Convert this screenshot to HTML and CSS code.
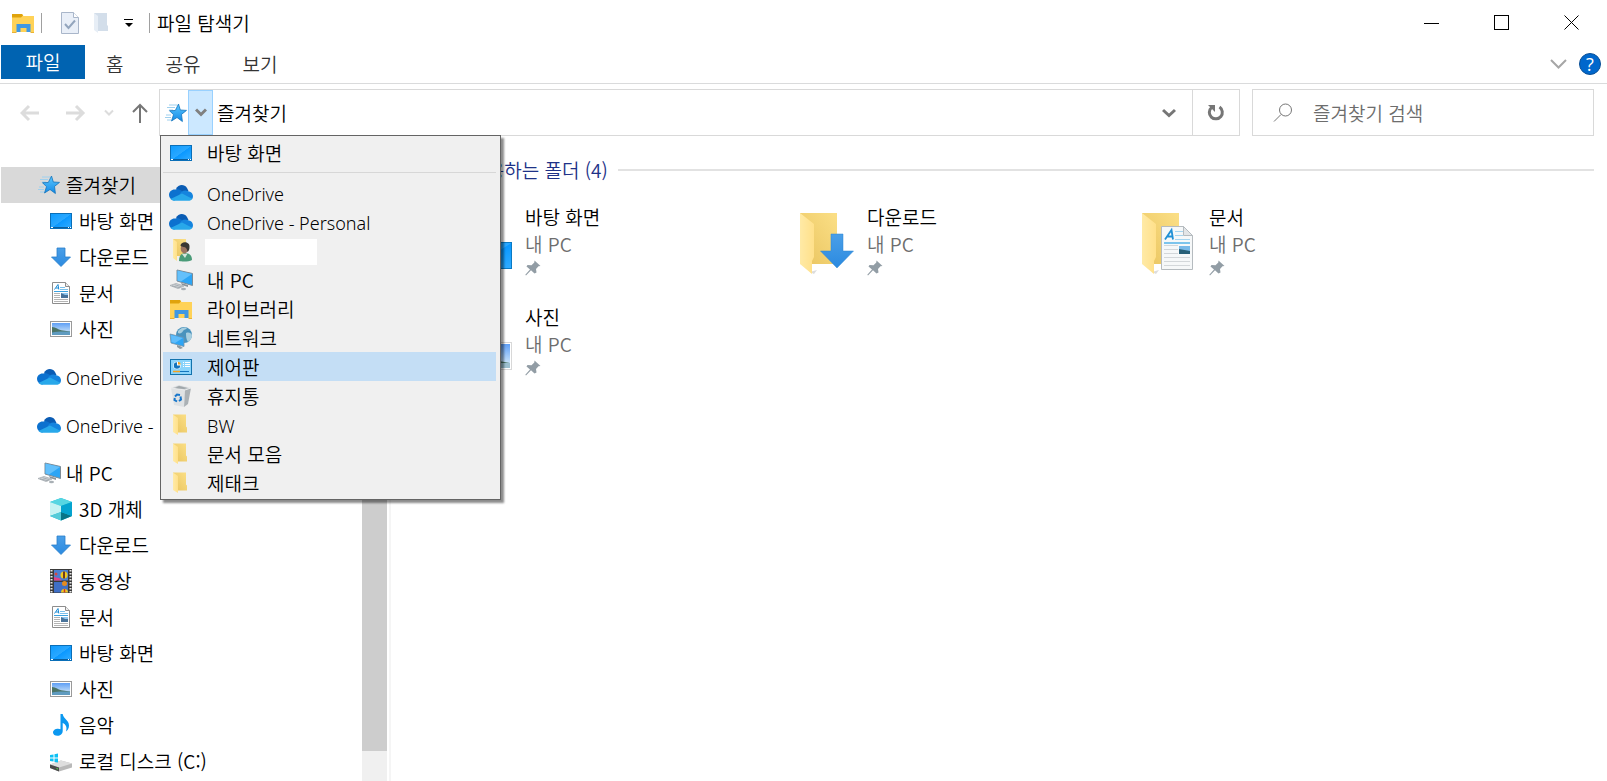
FILE: index.html
```html
<!DOCTYPE html>
<html lang="ko">
<head>
    <meta charset="UTF-8">
    <meta name="viewport" content="width=device-width, initial-scale=1.0">
    <title>파일 탐색기</title>
    <link rel="stylesheet" href="styles.css">
</head>
<body>
    <!-- Icons -->
    <svg class="defs" width="0" height="0" aria-hidden="true">
        <defs>
            <linearGradient id="gBlue" x1="0" y1="0" x2="0" y2="1"><stop offset="0" stop-color="#4a9fe8"/><stop offset="1" stop-color="#2b8ae0"/></linearGradient>
            <linearGradient id="gScreen" x1="0" y1="0" x2="1" y2="1"><stop offset="0" stop-color="#0d9bff"/><stop offset=".5" stop-color="#2aa8ff"/><stop offset=".52" stop-color="#0a98ff"/><stop offset="1" stop-color="#33adff"/></linearGradient>
            <linearGradient id="gFolder" x1="0" y1="0" x2="1" y2="0"><stop offset="0" stop-color="#ffeaa6"/><stop offset="1" stop-color="#ffe08a"/></linearGradient>
            <linearGradient id="gBack" x1="1" y1="0" x2="0" y2="1"><stop offset="0" stop-color="#fbdf86"/><stop offset="1" stop-color="#e9c45f"/></linearGradient>
            <linearGradient id="gSky" x1="0" y1="0" x2="0" y2="1"><stop offset="0" stop-color="#5f9ff5"/><stop offset="1" stop-color="#e4f4fb"/></linearGradient>
            <linearGradient id="gStar" x1="0" y1="0" x2="0" y2="1"><stop offset="0" stop-color="#5cc8ff"/><stop offset="1" stop-color="#1389e6"/></linearGradient>
        </defs>
        <symbol id="star" viewBox="0 0 24 24">
            <path d="M5 4h8M3 6.500h8M5 9h4M2 14h5M1 16.500h6M3 19h4" stroke="#9fd0ee" stroke-width="1"/>
            <path d="M14.500 3l1.800 6 6.200.4-5 4 .9 7.100-5.400-4-5.500 3.500 2-6.300-4-4 5.800-.2z" fill="url(#gStar)" stroke="#1273bd" stroke-width=".8"/>
        </symbol>
        <symbol id="desktop" viewBox="0 0 24 24">
            <rect x="1.500" y="4.500" width="21" height="15" fill="url(#gScreen)" stroke="#0a6fb8"/>
            <path d="M2 18.500h20" stroke="#0b5e9c"/><path d="M2 18.500h2M19 18.500h1M21 18.500h1" stroke="#fff"/>
        </symbol>
        <symbol id="download" viewBox="0 0 24 24">
            <path d="M8 3h8v9h5.500L12 21.500 2.500 12H8z" fill="url(#gBlue)" stroke="#2a7fca" stroke-width=".8"/>
        </symbol>
        <symbol id="doc" viewBox="0 0 24 24">
            <path d="M3.500 1.500h13l4 4v17h-17z" fill="#fff" stroke="#8d8d8d"/>
            <path d="M16.500 1.500v4h4" fill="#eee" stroke="#8d8d8d"/>
            <path d="M5.500 8.500L9 3.500l.8 5M7 7h3" stroke="#1a8ad4" stroke-width="1" fill="none"/>
            <path d="M11 6.500h5M11 8.500h8" stroke="#7cc0ea"/><path d="M5 10.500h14" stroke="#3ba2e0"/>
            <path d="M5 12.500h6M5 14.500h6M5 16.500h6M5 18.500h14M5 20.500h14" stroke="#b4b4b4"/>
            <rect x="12" y="12" width="7" height="5" fill="#49739a"/><path d="M12 12h7v2h-3z" fill="#8ec6ee"/>
        </symbol>
        <symbol id="picture" viewBox="0 0 24 24">
            <rect x="1.500" y="4.500" width="21" height="15" fill="#fff" stroke="#9a9a9a"/>
            <rect x="3" y="6" width="18" height="12" fill="url(#gSky)"/>
            <path d="M3 10c4 0 6 3 11 3.500l7 1V18H3z" fill="#4b7466"/><path d="M3 15.500c6-1.500 12-1 18-1V18H3z" fill="#5f9bc0"/>
        </symbol>
        <symbol id="cloud" viewBox="0 0 24 24">
            <path d="M7 8C9 3.500 15 2.500 18 7l1.500 3L13 14z" fill="#0a5cb4"/>
            <path d="M5.500 19.500A5.600 5.600 0 0 1 0 14c0-3.500 3-6 6.500-5.500 2-.7 4.500 0 6 1.200l3 3.300z" fill="#0c71cf"/>
            <path d="M10 15c1.500-5 6-6.500 9-4.700 2.800.2 5 2.400 5 5 0 1.200-.4 2.200-1 2.900z" fill="#1584de"/>
            <path d="M1.500 18l11.500-5.500 10.300 5.200c-.8 1.300-2.200 2.100-4 2.100H5.500c-1.600 0-3-.7-4-1.800z" fill="#28a8ea"/>
        </symbol>
        <symbol id="pc" viewBox="0 0 24 24">
            <path d="M8 2l15.500 3.500v12L8 13z" fill="#2da5f5" stroke="#7e8c96"/>
            <path d="M8.500 2.500l14.500 3.500L12 13.500l-3.500-1z" fill="#64c0fb"/>
            <path d="M12 15l7 2v2l-6-2z" fill="#8a949b"/>
            <path d="M1 17.500l6-2 8 2.500-6 2.500z" fill="#d5d9dc" stroke="#a4abb0" stroke-width=".8"/>
            <path d="M3 17.800l8 2M5.500 16.700l7 2" stroke="#9099a0" stroke-width=".7"/>
            <ellipse cx="14.500" cy="21" rx="2.500" ry="1.200" fill="#a9b0b5"/>
        </symbol>
        <symbol id="cube" viewBox="0 0 24 24">
            <path d="M12 1l11 4v14l-11 4.500L1 19V5z" fill="#12bcd4"/>
            <path d="M12 1l11 4-11 4L1 5z" fill="#57d6e2"/><path d="M1 5l11 4v6L1 19z" fill="#c6f3f3"/>
            <path d="M1 19l11-4v8.500z" fill="#56cbd8"/><path d="M12 15l11 4-11 4.500z" fill="#087486"/><path d="M12 9l11-4v14l-11-4z" fill="#05a3cf"/>
        </symbol>
        <symbol id="video" viewBox="0 0 24 24">
            <rect x="1" y="0" width="22" height="24" fill="#3a3a3a"/>
            <path d="M2.500 1v23M21.500 1v23" stroke="#e8e8e8" stroke-width="2" stroke-dasharray="1.500 1.500"/>
            <rect x="5" y="1" width="14" height="10.500" fill="#4b7fd2"/><rect x="5" y="13" width="14" height="10.500" fill="#3f6fc6"/>
            <path d="M5 8l5 1 3 2.500H5z" fill="#e0428a"/><circle cx="15" cy="6" r="3.500" fill="#f2c81f"/><path d="M15 2.500v7" stroke="#6d3a20" stroke-width="2"/>
            <circle cx="15.500" cy="14.500" r="2.500" fill="#e58b20"/><path d="M12 23.500c0-5 7-5 7 0z" fill="#f2c81f"/><path d="M15.500 20v3.500" stroke="#c8382c" stroke-width="1.500"/>
            <circle cx="7" cy="5" r="1.500" fill="#d54843"/>
        </symbol>
        <symbol id="music" viewBox="0 0 24 24">
            <path d="M11.500 1h2.200c.5 4.500 6.300 6 6.300 11.500 0 3-1.500 5-3 6 1.300-4.500 0-7-3.300-8.500v8c0 3-2.500 4.800-5.200 4.800C6 22.800 4 21.500 4 19.500c0-2.200 2.300-3.800 5-3.800 1 0 1.800.2 2.500.5z" fill="#0b98f0"/>
        </symbol>
        <symbol id="drive" viewBox="0 0 24 24">
            <path d="M1 15.500l11-4 11 3v4l-13 4-9-3.500z" fill="#b9b9b9"/><path d="M1 15.500l11-4 11 3-13 4z" fill="#dedede"/>
            <path d="M1 15.500l9 3v4L1 19z" fill="#4a4a4a"/><path d="M7.500 19.500l1.500.5" stroke="#54e04a"/>
            <path d="M1 6l3.500-.6v3.100H1zM5.500 5.200L9 4.600v3.900H5.500zM1 9.500h3.500v3.100L1 12.100zM5.500 9.500H9v4l-3.500-.6z" fill="#0cc0f4"/>
        </symbol>
        <symbol id="library" viewBox="0 0 24 24">
            <path d="M1 3h10l1.500 2H23v16H1z" fill="#ffd257"/><path d="M1 3h10l1 1.500-2 2H1z" fill="#e0a30c"/>
            <path d="M5.500 21v-8h14v8h-4v-4h-6v4z" fill="#3f98e4"/><path d="M1 21h4.500v1H1zM19.500 21H23v1h-3.500z" fill="#e9b233"/>
        </symbol>
        <symbol id="user" viewBox="0 0 24 24">
            <path d="M4 1h13v17H8z" fill="url(#gBack)"/><path d="M4 1l4 3v19l-4-3z" fill="url(#gFolder)"/>
            <path d="M10 23c0-6 3-8 6.500-8s6.500 2 6.500 7c-3 1.800-10 1.800-13 1z" fill="#4a9b78"/><path d="M13 16l3 4 2.500-4.500z" fill="#d6e6dd"/>
            <ellipse cx="15.500" cy="10.500" rx="3.800" ry="5" fill="#9b7460"/><path d="M11.500 8c0-5 9.500-5 9 1 0 3-1 4-2 5-.2-3-1.500-5-4-5z" fill="#383633"/>
        </symbol>
        <symbol id="network" viewBox="0 0 24 24">
            <circle cx="15" cy="9" r="8" fill="#4a93bd"/><path d="M9 5c3-4 8-4 9-3-1 2-3 1-4 3s-3 3-5 2zM17 7c3-1 5 0 6 2 0 3-2 6-4 7-2-3-2-6-2-9z" fill="#a9cfdf"/>
            <path d="M1 8l14 3.500v9L2 17z" fill="#2da5f5" stroke="#7593a8" stroke-width=".8"/><path d="M2 9l12 3-8 5-3.500-1z" fill="#60bdfb"/>
            <path d="M8 19v2l3 2 3-1-3-2z" fill="#8d999f"/>
        </symbol>
        <symbol id="control" viewBox="0 0 24 24">
            <rect x="1.500" y="4.500" width="21" height="15" fill="#8bd4fb" stroke="#1273ad"/>
            <circle cx="8" cy="10.500" r="3.800" fill="#fff"/><path d="M8 10.500V7.300A3.200 3.200 0 1 0 11.200 10.500z" fill="#1475bd"/><path d="M9 9.500V6.700a3 3 0 0 1 2.800 2.800z" fill="#f5a21c"/>
            <path d="M14 7.500h1M16 7.500h5M14 9.500h1M16 9.500h5M14 11.500h1M16 11.500h5" stroke="#fff"/><path d="M4 16.500h7" stroke="#f5a21c" stroke-width="1.500"/><path d="M11 16.500h9" stroke="#1475bd"/>
        </symbol>
        <symbol id="trash" viewBox="0 0 24 24">
            <path d="M2 4l14 2-1 17-10-2z" fill="#dfe2e4"/><path d="M16 6l6-2-3 16-4 3z" fill="#abb1b5"/>
            <path d="M2 4l8-3 12 3-6 2z" fill="#c4c9cc" stroke="#eceeef" stroke-width=".8"/><path d="M6 4l4-2 8 2-3 1z" fill="#a0a7ab"/>
            <path d="M6 12.500l2-2 3 .5M11.500 12.500l.5 3-2 1.500M8 17.500L5.500 16l.3-2" stroke="#1877cc" stroke-width="2" fill="none"/>
        </symbol>
        <symbol id="folder" viewBox="0 0 24 24">
            <path d="M4 1.500h13v12l1 1v5H8z" fill="url(#gBack)"/><path d="M4 1.500l5 3.500v17l-5-3z" fill="url(#gFolder)"/>
        </symbol>
        <symbol id="bigfolder" viewBox="0 0 64 64">
            <path d="M26 58l-3 4-4-2z" fill="#ddd"/><path d="M9 1h37v51H9z" fill="url(#gBack)"/><path d="M9 1l14 11v33l-2 4v13L9 52z" fill="url(#gFolder)"/>
        </symbol>
        <symbol id="bigdoc" viewBox="0 0 32 44">
            <path d="M.500.500h22l9 9v34H.500z" fill="#f6f8f9" stroke="#b5bbbf"/><path d="M22.500.500v9h9z" fill="#e3e5e7" stroke="#b5bbbf"/>
            <path d="M4 13.500L10.500 4l1.500 9.500M6.500 10.500h5" stroke="#2291d6" stroke-width="1.800" fill="none"/>
            <path d="M3 19.500h14M3 23.500h14M3 27.500h14M3 31.500h26M3 35.500h26M3 39.500h26" stroke="#d3d7da"/>
            <path d="M14 5.500h8M14 9.500h8M14 13.500h15" stroke="#a5d5f0"/><path d="M3 17h26" stroke="#7cc4ec" stroke-width="2"/>
            <rect x="18" y="20" width="11" height="8" fill="#78b9e8"/><path d="M18 23l11 2v3H18z" fill="#286078"/>
        </symbol>
        <symbol id="pin" viewBox="0 0 16 16">
            <path d="M9.500.500l6 5.500-2 .3-2.500 2.700.5 3.500-2 1-3.500-3.200L1 15.500l-.7-.7L5 9.500 1.500 6.500l1-1.500 4 .3L9.300 2.500z" fill="#929da5"/>
        </symbol>
    </svg>

    <div class="titlebar">
        <svg class="icon"><use href="#library"/></svg>
        <span class="sep"></span>
        <button class="quick" aria-label="속성">
            <svg width="18" height="22" viewBox="0 0 18 22"><path d="M.500.500h12l5 5v16H.500z" fill="#e9eff8" stroke="#a9b6ca"/><path d="M12.500.500v5h5" fill="#fff" stroke="#a9b6ca"/><path d="M4 12l3.500 4L14 8.500" fill="none" stroke="#93a5bd" stroke-width="2"/></svg>
        </button>
        <button class="quick" aria-label="새 폴더">
            <svg width="15" height="22" viewBox="0 0 15 22"><path d="M0 1h13v12l1 1v5H4z" fill="#d3deea"/><path d="M0 1l4 3v17l-4-3z" fill="#e7eef6"/></svg>
        </button>
        <button class="quick" aria-label="빠른 실행 도구 모음 사용자 지정">
            <svg width="10" height="10" viewBox="0 0 10 10"><path d="M0 1.500h9" stroke="#000"/><path d="M1 5h8L5 9z"/></svg>
        </button>
        <span class="sep"></span>
        <span class="title">파일 탐색기</span>
        <div class="window-buttons">
            <button aria-label="최소화"><svg width="16" height="16"><path d="M0 8.500h15" stroke="#000"/></svg></button>
            <button aria-label="최대화"><svg width="16" height="16"><rect x=".5" y=".5" width="14" height="14" fill="none" stroke="#000"/></svg></button>
            <button aria-label="닫기"><svg width="16" height="16"><path d="M.500.500l14 14M14.500.500l-14 14" stroke="#000"/></svg></button>
        </div>
    </div>

    <div class="ribbon">
        <button class="tab file">파일</button>
        <button class="tab">홈</button>
        <button class="tab">공유</button>
        <button class="tab">보기</button>
        <div class="ribbon-right">
            <button aria-label="리본 확장"><svg width="17" height="10"><path d="M1 1l7.500 7.500L16 1" fill="none" stroke="#a6a6a6" stroke-width="2"/></svg></button>
            <button class="help" aria-label="도움말">?</button>
        </div>
    </div>

    <div class="toolbar">
        <div class="history">
            <button aria-label="뒤로"><svg width="20" height="18"><path d="M19 9H2M9 2L2 9l7 7" fill="none" stroke="#dcdcdc" stroke-width="3"/></svg></button>
            <button aria-label="앞으로"><svg width="20" height="18"><path d="M0 9h17M10 2l7 7-7 7" fill="none" stroke="#dcdcdc" stroke-width="3"/></svg></button>
            <button class="recent" aria-label="최근 위치"><svg width="10" height="8"><path d="M1 1.500l4 4 4-4" fill="none" stroke="#dcdcdc" stroke-width="2"/></svg></button>
            <button class="up" aria-label="위로"><svg width="16" height="20"><path d="M8 20V2M1 9l7-7 7 7" fill="none" stroke="#767676" stroke-width="2"/></svg></button>
        </div>
        <div class="address">
            <svg class="icon"><use href="#star"/></svg>
            <button class="drop" aria-label="위치 목록"><svg width="12" height="9"><path d="M1 1.500l5 5 5-5" fill="none" stroke="#808080" stroke-width="3"/></svg></button>
            <button class="crumb">즐겨찾기</button>
            <button class="previous" aria-label="이전 위치"><svg width="14" height="10"><path d="M1 2l6 5.500L13 2" fill="none" stroke="#767676" stroke-width="3"/></svg></button>
            <button class="refresh" aria-label="새로 고침"><svg width="18" height="18" viewBox="0 0 18 18"><path d="M4.500 3.500A6.500 6.500 0 1 0 12.500 3" fill="none" stroke="#767676" stroke-width="3"/><path d="M1 1h7v7z" fill="#767676"/></svg></button>

            <div class="menu">
                <button><svg class="icon"><use href="#desktop"/></svg>바탕 화면</button>
                <hr>
                <button class="latin"><svg class="icon"><use href="#cloud"/></svg>OneDrive</button>
                <button class="latin"><svg class="icon"><use href="#cloud"/></svg>OneDrive - Personal</button>
                <button class="account" aria-label="사용자"><svg class="icon"><use href="#user"/></svg><span class="blank"></span></button>
                <button><svg class="icon"><use href="#pc"/></svg>내 PC</button>
                <button><svg class="icon"><use href="#library"/></svg>라이브러리</button>
                <button><svg class="icon"><use href="#network"/></svg>네트워크</button>
                <button class="active"><svg class="icon"><use href="#control"/></svg>제어판</button>
                <button><svg class="icon"><use href="#trash"/></svg>휴지통</button>
                <button class="latin"><svg class="icon"><use href="#folder"/></svg>BW</button>
                <button><svg class="icon"><use href="#folder"/></svg>문서 모음</button>
                <button><svg class="icon"><use href="#folder"/></svg>제태크</button>
            </div>
        </div>
        <label class="search">
            <svg width="20" height="20" viewBox="0 0 20 20"><circle cx="12.500" cy="7" r="6" fill="none" stroke="#767676"/><path d="M8 11.500L1 18.500" stroke="#767676"/></svg>
            <input type="text" placeholder="즐겨찾기 검색" aria-label="즐겨찾기 검색">
        </label>
    </div>

    <div class="container">
        <nav class="sidebar">
            <div class="tree">
                <div class="group">
                    <a href="#" class="root selected"><svg class="icon"><use href="#star"/></svg>즐겨찾기</a>
                    <a href="#"><svg class="icon"><use href="#desktop"/></svg>바탕 화면</a>
                    <a href="#"><svg class="icon"><use href="#download"/></svg>다운로드</a>
                    <a href="#"><svg class="icon"><use href="#doc"/></svg>문서</a>
                    <a href="#"><svg class="icon"><use href="#picture"/></svg>사진</a>
                </div>
                <div class="group">
                    <a href="#" class="root latin"><svg class="icon"><use href="#cloud"/></svg>OneDrive</a>
                </div>
                <div class="group">
                    <a href="#" class="root latin"><svg class="icon"><use href="#cloud"/></svg>OneDrive -</a>
                </div>
                <div class="group">
                    <a href="#" class="root"><svg class="icon"><use href="#pc"/></svg>내 PC</a>
                    <a href="#"><svg class="icon"><use href="#cube"/></svg>3D 개체</a>
                    <a href="#"><svg class="icon"><use href="#download"/></svg>다운로드</a>
                    <a href="#"><svg class="icon"><use href="#video"/></svg>동영상</a>
                    <a href="#"><svg class="icon"><use href="#doc"/></svg>문서</a>
                    <a href="#"><svg class="icon"><use href="#desktop"/></svg>바탕 화면</a>
                    <a href="#"><svg class="icon"><use href="#picture"/></svg>사진</a>
                    <a href="#"><svg class="icon"><use href="#music"/></svg>음악</a>
                    <a href="#"><svg class="icon"><use href="#drive"/></svg>로컬 디스크 (C:)</a>
                </div>
            </div>
            <div class="scrollbar"><div class="thumb"></div></div>
        </nav>

        <main class="content">
            <h2>자주 사용하는 폴더 (4)</h2>
            <div class="tiles">
                <div class="tile">
                    <svg class="tile-icon" viewBox="0 0 64 64"><use href="#bigfolder" width="64" height="64"/><rect x="20.500" y="30.500" width="42" height="26" fill="url(#gScreen)" stroke="#0a7ac4"/></svg>
                    <div class="tile-text"><span>바탕 화면</span><span class="place">내 PC</span><svg class="pin"><use href="#pin"/></svg></div>
                </div>
                <div class="tile">
                    <svg class="tile-icon" viewBox="0 0 64 64"><use href="#bigfolder" width="64" height="64"/><path d="M40 22h12v17h10.500L46 56 29.500 39H40z" fill="url(#gBlue)" stroke="#2f86d2" stroke-width=".5"/></svg>
                    <div class="tile-text"><span>다운로드</span><span class="place">내 PC</span><svg class="pin"><use href="#pin"/></svg></div>
                </div>
                <div class="tile">
                    <svg class="tile-icon" viewBox="0 0 64 64"><use href="#bigfolder" width="64" height="64"/><use href="#bigdoc" x="28" y="14" width="32" height="44"/></svg>
                    <div class="tile-text"><span>문서</span><span class="place">내 PC</span><svg class="pin"><use href="#pin"/></svg></div>
                </div>
                <div class="tile">
                    <svg class="tile-icon" viewBox="0 0 64 64"><use href="#bigfolder" width="64" height="64"/><rect x="20.500" y="30.500" width="42" height="27" fill="#fff" stroke="#d8d8d8"/><rect x="22" y="32" width="39" height="24" fill="url(#gSky)"/><path d="M22 44l39 7v5H22z" fill="#4b7466"/><path d="M22 51h39v5H22z" fill="#9cbfce"/></svg>
                    <div class="tile-text"><span>사진</span><span class="place">내 PC</span><svg class="pin"><use href="#pin"/></svg></div>
                </div>
            </div>
        </main>
    </div>
</body>
</html>
```

FILE: styles.css
```css
* {
    box-sizing: border-box;
}
body {
    margin: 0;
    height: 100vh;
    display: flex;
    flex-direction: column;
    overflow: hidden;
    background: #fff;
    color: #000;
    font-family: "Noto Sans CJK KR", sans-serif;
    font-size: 19px;
    font-weight: 350;
    line-height: 28px;
}
button {
    display: flex;
    align-items: center;
    justify-content: center;
    padding: 0;
    border: none;
    background: none;
    color: inherit;
    font: inherit;
}
a {
    color: inherit;
    text-decoration: none;
}
svg {
    flex-shrink: 0;
}
.defs {
    position: absolute;
}
.icon {
    width: 24px;
    height: 24px;
}
.latin {
    padding-top: 2px;
    font-family: "Noto Sans", "Open Sans", sans-serif;
    font-size: 18px;
    font-weight: 350;
}
.latin .icon {
    margin-bottom: 2px;
}

/* Title bar */
.titlebar {
    display: flex;
    align-items: center;
    height: 45px;
    padding-left: 11px;
    flex-shrink: 0;
}
.sep {
    width: 1px;
    height: 20px;
    margin-left: 6px;
    background: #a0a0a0;
}
.quick {
    margin-left: 15px;
}
.sep + .quick {
    margin-left: 19px;
}
.quick + .sep {
    margin-left: 15px;
}
.title {
    margin-left: 7px;
}
.window-buttons {
    display: flex;
    margin-left: auto;
}
.window-buttons button {
    width: 70px;
    height: 45px;
}

/* Ribbon */
.ribbon {
    display: flex;
    height: 39px;
    padding-left: 1px;
    border-bottom: 1px solid #dadbdc;
    flex-shrink: 0;
    color: #333;
}
.tab {
    padding: 0 21px;
}
.file {
    width: 84px;
    height: 34px;
    background: #0063b1;
    color: #fff;
}
.ribbon-right {
    display: flex;
    align-items: center;
    gap: 12px;
    margin-left: auto;
    padding-right: 6px;
}
.help {
    width: 22px;
    height: 22px;
    border: 1px solid #0a4f96;
    border-radius: 50%;
    background: #0067cc;
    color: #fff;
    font-family: "Open Sans", sans-serif;
    font-size: 18px;
    font-weight: 400;
}

/* Address bar */
.toolbar {
    display: flex;
    padding: 5px 13px 0 0;
    flex-shrink: 0;
}
.history {
    display: flex;
    align-items: center;
    width: 159px;
    padding-left: 20px;
}
.history button + button {
    margin-left: 26px;
}
.history .recent + .up,
.history button + .recent {
    margin-left: 18px;
}
.address {
    position: relative;
    display: flex;
    align-items: center;
    flex: 1;
    height: 47px;
    border: 1px solid #d9d9d9;
}
.address > .icon {
    margin: 0 0 0 4px;
}
.drop {
    width: 25px;
    height: 45px;
    border: 1px solid #99d1ff;
    background: #cce8ff;
}
.crumb {
    margin-left: 4px;
}
.previous {
    width: 46px;
    height: 45px;
    margin-left: auto;
}
.refresh {
    width: 47px;
    height: 45px;
    border-left: 1px solid #d9d9d9;
}
.search {
    display: flex;
    align-items: center;
    width: 342px;
    margin-left: 12px;
    padding-left: 20px;
    border: 1px solid #d9d9d9;
}
.search input {
    flex: 1;
    min-width: 0;
    margin-left: 20px;
    padding: 0;
    border: none;
    outline: none;
    font: inherit;
}
.search input::placeholder {
    color: #6d6d6d;
}

/* Drop-down list */
.menu {
    position: absolute;
    z-index: 1;
    top: 45px;
    left: 0;
    width: 341px;
    padding: 2px 4px 2px 2px;
    border: 1px solid #646464;
    background: #f0f0f0;
    box-shadow: 3px 3px 2px rgba(0, 0, 0, 0.45);
}
.menu button {
    width: 100%;
    height: 29px;
    padding-left: 6px;
    justify-content: flex-start;
}
.menu .icon {
    margin-right: 14px;
}
.menu .account {
    gap: 12px;
    align-items: flex-end;
}
.menu .account .icon {
    margin: 0 0 3px;
}
.menu hr {
    margin: 5px 0;
    border: none;
    border-top: 1px solid #d7d7d7;
}
.menu .active {
    background: #c4def5;
}
.blank {
    width: 112px;
    height: 26px;
    background: #fff;
}

/* Navigation pane */
.container {
    display: flex;
    flex: 1;
    min-height: 0;
}
.sidebar {
    display: flex;
    width: 391px;
    padding-left: 1px;
    border-right: 2px solid #f5f5f5;
}
.tree {
    flex: 1;
    padding-top: 31px;
}
.group {
    margin-bottom: 12px;
}
.group a {
    display: flex;
    align-items: center;
    height: 36px;
    padding-left: 48px;
    gap: 6px;
}
.group .root {
    padding-left: 36px;
    gap: 5px;
}
.group .selected {
    background: #d9d9d9;
}
.scrollbar {
    width: 25px;
    margin-right: 2px;
    padding-bottom: 30px;
    background: #f0f0f0;
}
.thumb {
    height: 100%;
    background: #cdcdcd;
}

/* Folder view */
.content {
    flex: 1;
    padding: 20px 13px 0 38px;
}
.content h2 {
    display: flex;
    align-items: center;
    gap: 10px;
    margin: 0;
    color: #1e3287;
    font-size: 19px;
    font-weight: 350;
}
.content h2::after {
    content: "";
    flex: 1;
    height: 2px;
    background: #e2e2e2;
}
.tiles {
    display: grid;
    grid-template-columns: repeat(auto-fill, 342px);
    grid-auto-rows: 100px;
    padding: 19px 0 0 20px;
}
.tile {
    display: flex;
    gap: 12px;
    line-height: 27px;
}
.tile-icon {
    width: 64px;
    height: 64px;
    margin-top: 9px;
}
.tile-text {
    display: flex;
    flex-direction: column;
}
.place {
    color: #6d6d6d;
}
.pin {
    width: 16px;
    height: 16px;
    margin-top: 3px;
}
```
